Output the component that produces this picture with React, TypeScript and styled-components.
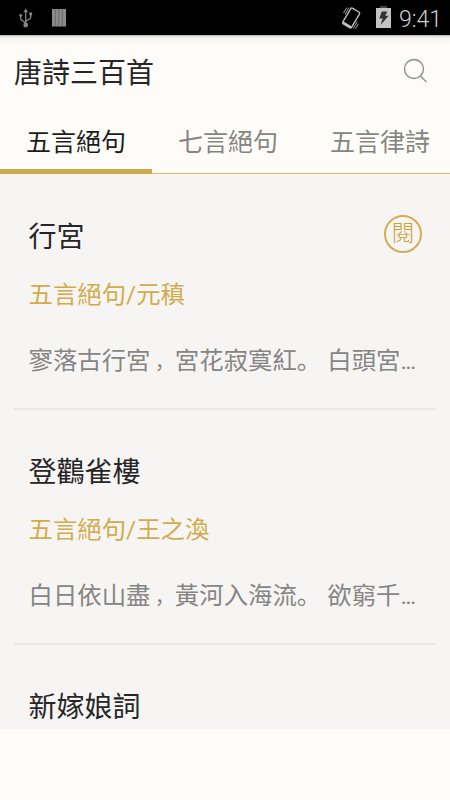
import React from "react";
import styled, { createGlobalStyle } from "styled-components";

const GlobalStyle = createGlobalStyle`
  * { box-sizing: border-box; }
  body { margin: 0; background: #fdfcf8; }
`;

const Screen = styled.div`
  width: 450px;
  height: 800px;
  overflow: hidden;
  display: flex;
  flex-direction: column;
  background: #fdfcf8;
  font-family: Roboto, "Noto Sans CJK SC", sans-serif;
  font-weight: 400;
  white-space: nowrap;
`;

const StatusBar = styled.div`
  height: 35px;
  flex: none;
  display: flex;
  justify-content: space-between;
  background: #000;
`;

const StatusIcons = styled.svg`
  display: block;
`;

const StatusRight = styled.div`
  display: flex;
`;

const Clock = styled.span`
  width: 51px;
  line-height: 39px;
  font-size: 23px;
  font-weight: 300;
  color: #cfcfcf;
`;

const Header = styled.header`
  height: 73px;
  flex: none;
  display: flex;
  justify-content: space-between;
  align-items: flex-start;
  padding: 0 0 0 14px;
  background: linear-gradient(#b5b4b1 0, #ecebe8 2px, #f7f6f2 5px, #fdfcf8 10px);
`;

const Heading = styled.h1`
  margin: 0;
  font-size: 28px;
  font-weight: 400;
  line-height: 78px;
  color: #262626;
`;

const Tabs = styled.nav`
  height: 66px;
  flex: none;
  display: flex;
  border-bottom: 1px solid #dfb862;
`;

const Tab = styled.div<{ $active?: boolean }>`
  width: 152px;
  flex: none;
  height: 66px;
  text-align: center;
  font-size: 25px;
  line-height: 70px;
  color: ${(p) => (p.$active ? "#1c1c1c" : "#858584")};
  border-bottom: ${(p) => (p.$active ? "5px solid #cfaa4a" : "0")};
`;

const List = styled.main`
  height: 555px;
  flex: none;
  overflow: hidden;
  padding: 0 14px;
  background: #f7f5f4;
`;

const Poem = styled.article`
  height: 235px;
  padding: 37px 15px 0 14.5px;
  border-bottom: 2px solid #e9e8e7;
  &:first-child {
    height: 236px;
    padding-top: 38px;
  }
`;

const TitleRow = styled.div`
  height: 52px;
  display: flex;
  justify-content: space-between;
  align-items: center;
`;

const Title = styled.h2`
  margin: 0;
  font-size: 28px;
  font-weight: 400;
  line-height: 52px;
  color: #262626;
`;

const ReadBadge = styled.span`
  width: 38px;
  height: 38px;
  margin: -8px -1px 0 0;
  border: 2px solid #d3ae50;
  border-radius: 50%;
  text-align: center;
  font-size: 23px;
  font-weight: 300;
  line-height: 34px;
  color: #cca133;
`;

const Author = styled.p`
  margin: 13px 0 0;
  font-size: 24.4px;
  line-height: 36px;
  color: #d1ac4c;
`;

const Excerpt = styled.p`
  margin: 30px 0 0;
  font-size: 24.4px;
  line-height: 36px;
  color: #858584;
`;

const Comma = styled.span`
  display: inline-block;
  width: 24.4px;
  padding-left: 4.4px;
  font-size: 20px;
`;

const Ellipsis = styled.span`
  letter-spacing: -1.7px;
`;

const SearchButton = styled.svg`
  display: block;
`;

function Search() {
  return (
    <SearchButton width="50" height="73" viewBox="0 0 50 73" fill="none" stroke="#8b8a88" strokeWidth="1.3">
      <circle cx="14" cy="34" r="9.5" />
      <path d="M20.5 41l6 6" />
    </SearchButton>
  );
}

function LeftStatus() {
  return (
    <StatusIcons width="80" height="35" viewBox="0 0 80 35">
      <g fill="none" stroke="#858585" strokeWidth="1.3">
        <path d="M25.7 10v15M20.7 15.5v3.2q0 1.4 5 4M30.7 14.5v3q0 1.4-5 3.6" />
      </g>
      <g fill="#858585">
        <path d="M23.4 12.2l2.3-3.7 2.3 3.7z" />
        <circle cx="25.7" cy="25" r="2.4" />
        <circle cx="20.7" cy="15.4" r="1.4" />
        <rect x="29.3" y="12.5" width="2.8" height="2.8" />
      </g>
      <path fill="#8c8c8c" d="M52 9h14v17.5H52z" />
      <path stroke="#606060" strokeWidth=".8" d="M55.3 9v17.5M58.8 9v17.5M62.3 9v17.5" />
    </StatusIcons>
  );
}

function RightStatus() {
  return (
    <StatusIcons width="64" height="35" viewBox="335 0 64 35">
      <g transform="rotate(31 351 18)" fill="none" stroke="#bdbdbd">
        <rect x="346" y="8.8" width="10.2" height="18.2" rx="1.5" strokeWidth="1.4" />
        <path strokeWidth="2.4" d="M346.5 26h9.2" />
        <path strokeWidth="1" stroke="#949494" d="M344 10v8M342 11.5v6M358.3 18v8M360.3 19v6" />
      </g>
      <path fill="#444" d="M380 6h7v2h-7z" />
      <path fill="#c4c4c4" d="M376 8h15v20h-15z" />
      <path fill="#333" d="M381.8 11.5h5.6l-2.2 4.3h3.4l-8 9.2 2-6.5h-3.3z" />
    </StatusIcons>
  );
}

const poems = [
  { title: "行宮", author: "五言絕句/元稹", first: "寥落古行宮", rest: "宮花寂寞紅。 白頭宮", badge: true },
  { title: "登鸛雀樓", author: "五言絕句/王之渙", first: "白日依山盡", rest: "黃河入海流。 欲窮千" },
  { title: "新嫁娘詞" },
];

export default function App() {
  return (
    <Screen>
      <GlobalStyle />
      <StatusBar>
        <LeftStatus />
        <StatusRight>
          <RightStatus />
          <Clock>9:41</Clock>
        </StatusRight>
      </StatusBar>
      <Header>
        <Heading>唐詩三百首</Heading>
        <Search />
      </Header>
      <Tabs>
        <Tab $active>五言絕句</Tab>
        <Tab>七言絕句</Tab>
        <Tab>五言律詩</Tab>
      </Tabs>
      <List>
        {poems.map((p) => (
          <Poem key={p.title}>
            <TitleRow>
              <Title>{p.title}</Title>
              {p.badge && <ReadBadge>閱</ReadBadge>}
            </TitleRow>
            {p.author && <Author>{p.author}</Author>}
            {p.first && (
              <Excerpt>
                {p.first}
                <Comma>，</Comma>
                {p.rest}
                <Ellipsis>...</Ellipsis>
              </Excerpt>
            )}
          </Poem>
        ))}
      </List>
    </Screen>
  );
}
